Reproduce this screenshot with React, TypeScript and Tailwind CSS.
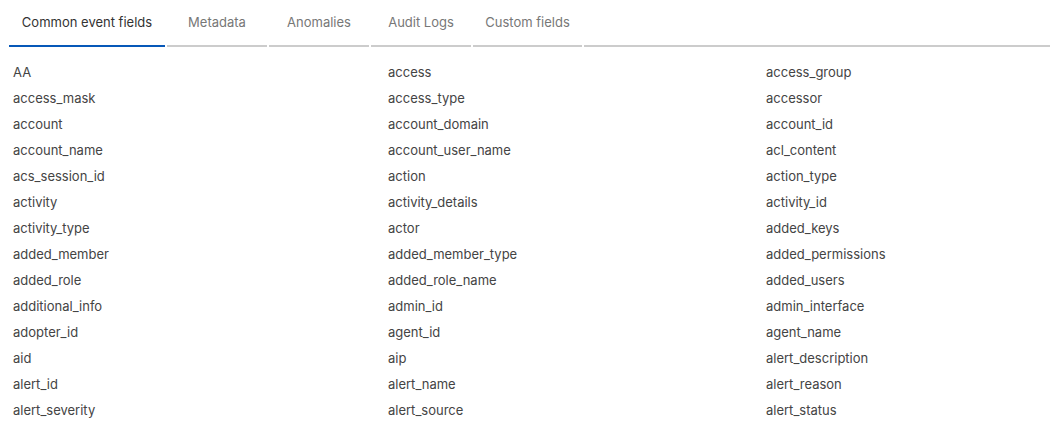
import React from "react";

const tabs = [
  { label: "Common event fields", w: "w-[156px]", active: true },
  { label: "Metadata", w: "w-[100px]" },
  { label: "Anomalies", w: "w-[100px]" },
  { label: "Audit Logs", w: "w-[100px]" },
  { label: "Custom fields", w: "w-[109px]" },
];

const fields = [
  ["AA", "access", "access_group"],
  ["access_mask", "access_type", "accessor"],
  ["account", "account_domain", "account_id"],
  ["account_name", "account_user_name", "acl_content"],
  ["acs_session_id", "action", "action_type"],
  ["activity", "activity_details", "activity_id"],
  ["activity_type", "actor", "added_keys"],
  ["added_member", "added_member_type", "added_permissions"],
  ["added_role", "added_role_name", "added_users"],
  ["additional_info", "admin_id", "admin_interface"],
  ["adopter_id", "agent_id", "agent_name"],
  ["aid", "aip", "alert_description"],
  ["alert_id", "alert_name", "alert_reason"],
  ["alert_severity", "alert_source", "alert_status"],
];

export default function App() {
  return (
    <div className="w-[1050px] h-[441px] bg-white overflow-hidden font-['Inter',sans-serif] text-[13px]">
      <div className="flex pl-[9px] gap-[2px]">
        {tabs.map((t) => (
          <div
            key={t.label}
            className={
              t.active
                ? `${t.w} h-[47px] flex items-center justify-center border-b-2 border-[#0758b8] text-[#333333]`
                : `${t.w} h-[47px] flex items-center justify-center border-b-2 border-[#cccccc] text-[#777777]`
            }
          >
            {t.label}
          </div>
        ))}
        <div className="flex-1 h-[47px] border-b-2 border-[#cccccc]" />
      </div>
      <div className="pt-[13px] pl-[13px] grid grid-cols-[375px_378px_1fr]">
        {fields.flat().map((f, i) => (
          <div key={i} className="h-[26px] flex items-center text-[#444444]">
            {f}
          </div>
        ))}
      </div>
    </div>
  );
}
